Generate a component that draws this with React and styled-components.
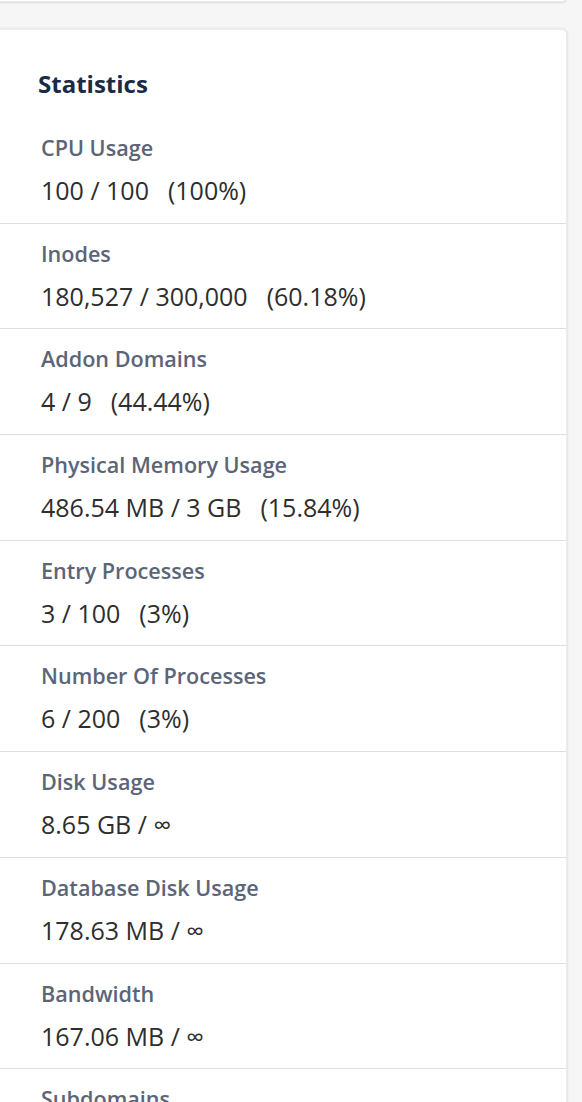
import React from "react";
import styled, { createGlobalStyle } from "styled-components";

const Global = createGlobalStyle`
  html, body { margin: 0; padding: 0; background: #f6f6f6; }
  body { font-family: "Open Sans", "Noto Sans", sans-serif; overflow: hidden; }
`;

const Page = styled.div`
  display: flex;
  flex-direction: column;
  gap: 27px;
  height: 1102px;
  overflow: hidden;
`;

const Card = styled.section`
  background: #fff;
  margin-left: -10px;
  width: 577px;
  border-radius: 5px;
  box-shadow: 0 0 3px rgba(0, 0, 0, 0.12), 0 1px 2px rgba(0, 0, 0, 0.06);
  border: 1px solid #ececec;
  box-sizing: border-box;
  flex: none;
`;

const TopCard = styled(Card)`
  margin-top: -40px;
  height: 42px;
`;

const Title = styled.h2`
  margin: 0;
  padding: 38px 0 18px 47px;
  font-size: 24px;
  line-height: 32px;
  font-weight: 700;
  color: #1b2a47;
`;

const Row = styled.div`
  padding: 16px 0 16.7px 50px;
  border-bottom: 1px solid #dedede;
  display: flex;
  flex-direction: column;
  gap: 12px;
  &:last-child { border-bottom: none; }
`;

const Label = styled.div`
  font-size: 21.6px;
  line-height: 28px;
  font-weight: 600;
  color: #5b6577;
`;

const Value = styled.div`
  font-size: 25px;
  line-height: 32px;
  font-weight: 400;
  color: #2e2e2e;
  white-space: pre;
`;

const Pct = styled.span`
  margin-left: 19px;
`;

const stats = [
  ["CPU Usage", "100 / 100", "(100%)"],
  ["Inodes", "180,527 / 300,000", "(60.18%)"],
  ["Addon Domains", "4 / 9", "(44.44%)"],
  ["Physical Memory Usage", "486.54 MB / 3 GB", "(15.84%)"],
  ["Entry Processes", "3 / 100", "(3%)"],
  ["Number Of Processes", "6 / 200", "(3%)"],
  ["Disk Usage", "8.65 GB / ∞", null],
  ["Database Disk Usage", "178.63 MB / ∞", null],
  ["Bandwidth", "167.06 MB / ∞", null],
  ["Subdomains", "2 / ∞", null],
];

export default function App() {
  return (
    <>
      <Global />
      <Page>
        <TopCard />
        <Card>
          <Title>Statistics</Title>
          {stats.map(([label, value, pct]) => (
            <Row key={label}>
              <Label>{label}</Label>
              <Value>
                {value}
                {pct && <Pct>{pct}</Pct>}
              </Value>
            </Row>
          ))}
        </Card>
      </Page>
    </>
  );
}
